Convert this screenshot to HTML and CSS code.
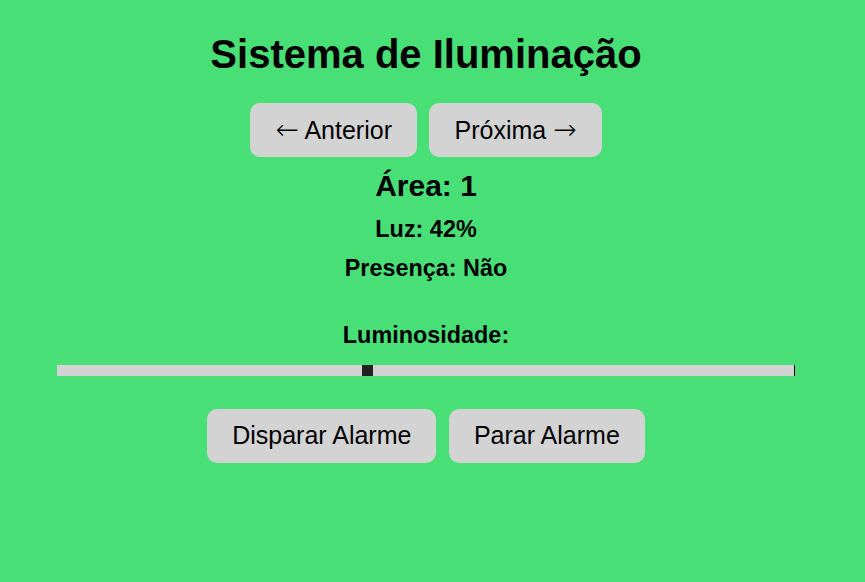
FILE: index.html
```html
<!DOCTYPE html>
<html lang="pt">
<head>
<meta charset="utf-8">
<title>Sistema de Iluminação</title>
<link rel="stylesheet" href="styles.css">
</head>
<body>
<main class="app">
  <h1 class="title">Sistema de Iluminação</h1>
  <div class="nav">
    <button class="btn"><span class="arrow">←</span> Anterior</button>
    <button class="btn">Próxima <span class="arrow">→</span></button>
  </div>
  <h2 class="area">Área: 1</h2>
  <h3 class="info info-luz">Luz: 42%</h3>
  <h3 class="info info-presenca">Presença: Não</h3>
  <label class="label" for="lum">Luminosidade:</label>
  <input class="slider" id="lum" type="range" min="0" max="100" value="42">
  <div class="actions">
    <button class="btn">Disparar Alarme</button>
    <button class="btn">Parar Alarme</button>
  </div>
</main>
</body>
</html>
```

FILE: styles.css
```css
html, body {
  margin: 0;
  padding: 0;
  background: #48df77;
  height: 100%;
}
body {
  font-family: "Liberation Sans", Arial, sans-serif;
  color: #000;
}
.app {
  margin-left: 8px;
  width: 836px;
  display: flex;
  flex-direction: column;
  align-items: center;
  text-align: center;
}
.title {
  font-size: 40px;
  font-weight: bold;
  line-height: normal;
  margin: 32px 0 0;
}
.nav, .actions {
  display: flex;
  gap: 12.5px;
  justify-content: center;
}
.nav { margin-top: 26px; }
.actions { margin-top: 33.3px; }
.btn {
  font-family: "Liberation Sans", Arial, sans-serif;
  font-size: 25px;
  line-height: 28.75px;
  padding: 12.5px 25px;
  background: #d3d3d3;
  color: #000;
  border: none;
  border-radius: 10px;
  margin: 0;
}
.arrow {
  font-family: "DejaVu Sans", sans-serif;
  font-weight: 200;
  font-size: 28px;
  line-height: 1;
}
.area {
  font-size: 30px;
  font-weight: bold;
  line-height: normal;
  margin: 11.75px 0 0;
}
.info {
  font-size: 23.4px;
  font-weight: bold;
  line-height: normal;
  margin: 0;
}
.info-luz { margin-top: 13px; }
.info-presenca { margin-top: 12.4px; }
.label {
  font-size: 23.4px;
  font-weight: bold;
  line-height: normal;
  margin-top: 39.8px;
}
.slider {
  -webkit-appearance: none;
  appearance: none;
  box-sizing: border-box;
  width: 738px;
  height: 11px;
  margin: 16px 0 0;
  padding: 0;
  background: #d3d3d3;
  border: none;
  border-right: 1px solid #000;
  outline: none;
}
.slider::-webkit-slider-runnable-track {
  height: 11px;
  background: transparent;
  border: none;
}
.slider::-webkit-slider-thumb {
  -webkit-appearance: none;
  appearance: none;
  width: 11px;
  height: 11px;
  background: #222;
  border: none;
  border-radius: 0;
  margin-top: 0;
}
.slider::-moz-range-thumb {
  width: 11px;
  height: 11px;
  background: #222;
  border: none;
  border-radius: 0;
}
```
